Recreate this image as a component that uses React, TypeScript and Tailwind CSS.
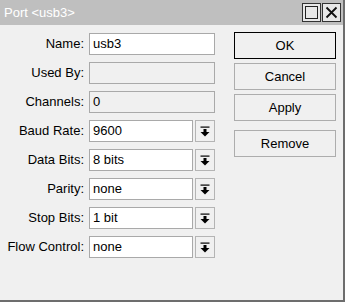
import React from "react";

const Arrow = () => (
  <svg width="10" height="11" viewBox="0 0 10 11">
    <rect x="0.5" y="0.5" width="9" height="1.2" fill="#000" />
    <rect x="3.5" y="3" width="3" height="3" fill="#000" />
    <polygon points="0.5,6 9.5,6 5,10.5" fill="#000" />
  </svg>
);

function TextRow({ label, value, disabled }: { label: string; value: string; disabled?: boolean }) {
  return (
    <div className="flex items-center h-[22px]">
      <div className="w-[89px] pr-[5px] text-right text-[13px] text-[#000]">{label}</div>
      <div
        className={`w-[126px] h-[22px] border border-[#a9a9a9] flex items-center pl-[3px] text-[13px] ${disabled ? "bg-[#f0f0f0]" : "bg-white"}`}
      >
        {value}
      </div>
    </div>
  );
}

function SelectRow({ label, value }: { label: string; value: string }) {
  return (
    <div className="flex items-center h-[22px]">
      <div className="w-[89px] pr-[5px] text-right text-[13px] text-[#000]">{label}</div>
      <div className="w-[104px] h-[22px] border border-[#a9a9a9] bg-white flex items-center pl-[3px] text-[13px]">
        {value}
      </div>
      <div className="ml-[2px] w-[20px] h-[22px] border border-[#b4b4b4] bg-[#f0f0f0] flex items-center justify-center">
        <Arrow />
      </div>
    </div>
  );
}

function Btn({ label, def }: { label: string; def?: boolean }) {
  return (
    <div
      className={`w-[102px] h-[27px] flex items-center justify-center text-[13px] bg-[#f0f0f0] border ${def ? "border-[#000]" : "border-[#adadad]"}`}
    >
      {label}
    </div>
  );
}

export default function App() {
  return (
    <div className="w-[346px] h-[302px] bg-white" style={{ fontFamily: '"Liberation Sans", Arial, sans-serif' }}>
      <div className="w-[345px] h-[302px] border-r-2 border-b-2 border-[#6d6d6d] bg-[#f0f0f0] flex flex-col">
        <div className="h-[25px] bg-[#bfbfbf] flex items-center justify-between pl-[4px] pr-[2px]">
          <span className="text-[13px] text-white">Port &lt;usb3&gt;</span>
          <div className="flex gap-[1px]">
            <div className="w-[19px] h-[19px] border border-[#333] bg-[#e8e8e8] flex items-center justify-center">
              <div className="w-[13px] h-[13px] border-[1.5px] border-[#222]" />
            </div>
            <div className="w-[19px] h-[19px] border border-[#333] bg-[#e8e8e8] flex items-center justify-center">
              <svg width="13" height="13" viewBox="0 0 13 13">
                <path d="M1.5 1.5 L11.5 11.5 M11.5 1.5 L1.5 11.5" stroke="#111" strokeWidth="1.8" />
              </svg>
            </div>
          </div>
        </div>
        <div className="flex">
          <div className="pt-[8px] flex flex-col gap-[7px]">
            <TextRow label="Name:" value="usb3" />
            <TextRow label="Used By:" value="" disabled />
            <TextRow label="Channels:" value="0" disabled />
            <SelectRow label="Baud Rate:" value="9600" />
            <SelectRow label="Data Bits:" value="8 bits" />
            <SelectRow label="Parity:" value="none" />
            <SelectRow label="Stop Bits:" value="1 bit" />
            <SelectRow label="Flow Control:" value="none" />
          </div>
          <div className="ml-[19px] pt-[7px] flex flex-col gap-[4px]">
            <Btn label="OK" def />
            <Btn label="Cancel" />
            <Btn label="Apply" />
            <div className="h-[1px]" />
            <Btn label="Remove" />
          </div>
        </div>
      </div>
    </div>
  );
}
